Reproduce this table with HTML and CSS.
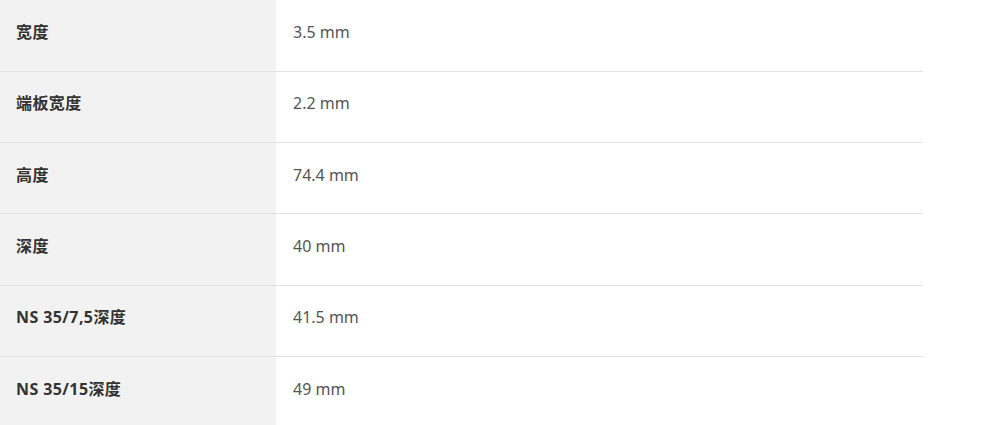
FILE: index.html
```html
<!DOCTYPE html>
<html lang="zh">
<head>
<meta charset="utf-8">
<link rel="stylesheet" href="styles.css">
</head>
<body>
<table class="spec">
  <tbody>
    <tr><th>宽度</th><td>3.5 mm</td></tr>
    <tr><th>端板宽度</th><td>2.2 mm</td></tr>
    <tr><th>高度</th><td>74.4 mm</td></tr>
    <tr><th>深度</th><td>40 mm</td></tr>
    <tr><th>NS 35/7,5深度</th><td>41.5 mm</td></tr>
    <tr><th>NS 35/15深度</th><td>49 mm</td></tr>
  </tbody>
</table>
</body>
</html>
```
FILE: styles.css
```css
html, body {
  margin: 0;
  padding: 0;
  background: #fff;
}
body {
  font-family: "Noto Sans", "Noto Sans CJK SC", sans-serif;
  font-size: 16px;
}
.spec {
  width: 923px;
  border-collapse: collapse;
}
.spec tr {
  border-bottom: 1px solid #e3e3e3;
}
.spec tr:last-child {
  border-bottom: none;
}
.spec th,
.spec td {
  height: 71.25px;
  box-sizing: border-box;
  padding: 0 16px 7px 16px;
  vertical-align: middle;
  text-align: left;
  line-height: 22px;
}
.spec th {
  width: 276px;
  background: #f2f2f2;
  color: #333;
  font-weight: 700;
  letter-spacing: 0.4px;
}
.spec td {
  color: #555;
  font-weight: 400;
  padding-left: 17px;
}
```
